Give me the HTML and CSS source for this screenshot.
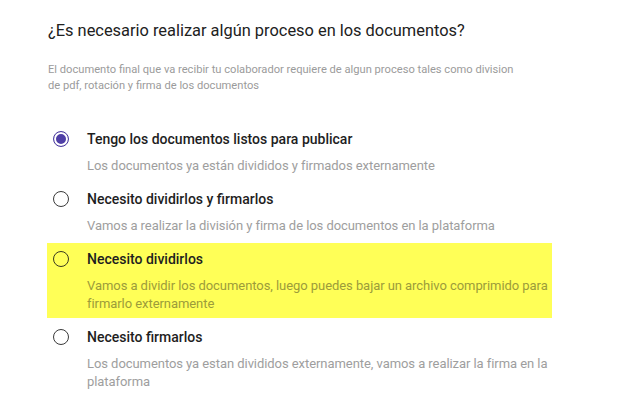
FILE: index.html
```html
<!DOCTYPE html>
<html lang="es">
<head>
<meta charset="utf-8">
<title>Proceso de documentos</title>
<link rel="stylesheet" href="styles.css">
</head>
<body>
<main class="panel">
  <h1 class="question">¿Es necesario realizar algún proceso en los documentos?</h1>
  <p class="hint">El documento final que va recibir tu colaborador requiere de algun proceso tales como division de pdf, rotación y firma de los documentos</p>

  <div class="options">
    <label class="option">
      <span class="radio checked"></span>
      <span class="text">
        <span class="title">Tengo los documentos listos para publicar</span>
        <span class="desc">Los documentos ya están divididos y firmados externamente</span>
      </span>
    </label>
    <label class="option">
      <span class="radio"></span>
      <span class="text">
        <span class="title">Necesito dividirlos y firmarlos</span>
        <span class="desc">Vamos a realizar la división y firma de los documentos en la plataforma</span>
      </span>
    </label>
    <label class="option marked">
      <span class="radio"></span>
      <span class="text">
        <span class="title">Necesito dividirlos</span>
        <span class="desc">Vamos a dividir los documentos, luego puedes bajar un archivo comprimido para firmarlo externamente</span>
      </span>
    </label>
    <label class="option">
      <span class="radio"></span>
      <span class="text">
        <span class="title">Necesito firmarlos</span>
        <span class="desc">Los documentos ya estan divididos externamente, vamos a realizar la firma en la plataforma</span>
      </span>
    </label>
  </div>
</main>
</body>
</html>
```

FILE: styles.css
```css
* {
  box-sizing: border-box;
}

html, body {
  margin: 0;
  padding: 0;
  background: #ffffff;
}

body {
  font-family: Roboto, "Liberation Sans", Arial, sans-serif;
  color: #222222;
}

.panel {
  padding: 19px 0 0 47px;
  width: 552px;
}

.question {
  margin: 0 0 0 1px;
  font-size: 16.4px;
  font-weight: 400;
  line-height: 24px;
  color: #212121;
}

.hint {
  margin: 19px 0 0 1px;
  font-size: 11.15px;
  line-height: 16px;
  color: #9b9b9b;
  width: 475px;
}

.options {
  margin-top: 29px;
  display: flex;
  flex-direction: column;
  gap: 4px;
}

.option {
  display: flex;
  align-items: flex-start;
  gap: 18px;
  padding: 6px 6px 5px 6px;
}

.option + .option {
  margin-top: -1px;
}

.option.marked {
  background: #ffff57;
}

.radio {
  flex: none;
  width: 16px;
  height: 16px;
  margin-top: 2px;
  border-radius: 50%;
  border: 1.5px solid #3a3a3a;
  background: #ffffff;
}

.marked .radio {
  background: #ffff57;
  border-color: #3a3a20;
}

.radio.checked {
  border: 1.5px solid #4a3a9e;
  box-shadow: inset 0 0 0 2px #ffffff, inset 0 0 0 8px #4f3fa6;
}

.text {
  display: flex;
  flex-direction: column;
  gap: 8px;
}

.title {
  font-size: 14px;
  font-weight: 500;
  line-height: 20px;
  color: #1e1e1e;
}

.desc {
  font-size: 13px;
  line-height: 18px;
  letter-spacing: -0.06px;
  color: #9e9e9e;
  width: 466px;
}

.marked .desc {
  color: #9c9c3a;
}
```
